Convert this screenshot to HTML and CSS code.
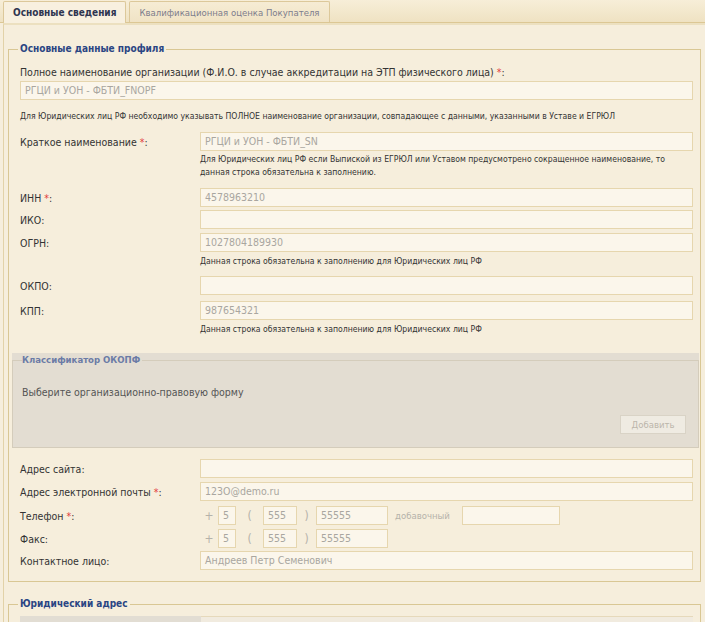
FILE: index.html
```html
<!DOCTYPE html>
<html lang="ru">
<head>
<meta charset="utf-8">
<title>Профиль организации</title>
<link rel="stylesheet" href="styles.css">
</head>
<body>
<div class="tabs">
  <div class="tab active">Основные сведения</div>
  <div class="tab">Квалификационная оценка Покупателя</div>
</div>
<div class="panel">
  <fieldset class="box">
    <legend>Основные данные профиля</legend>

    <div class="top-label">Полное наименование организации (Ф.И.О. в случае аккредитации на ЭТП физического лица) <span class="req">*</span>:</div>
    <div class="field full">РГЦИ и УОН - ФБТИ_FNOPF</div>
    <div class="hint hint-full">Для Юридических лиц РФ необходимо указывать ПОЛНОЕ наименование организации, совпадающее с данными, указанными в Уставе и ЕГРЮЛ</div>

    <div class="row r-short">
      <div class="lbl">Краткое наименование <span class="req">*</span>:</div>
      <div class="field">РГЦИ и УОН - ФБТИ_SN</div>
      <div class="hint hint-2">Для Юридических лиц РФ если Выпиской из ЕГРЮЛ или Уставом предусмотрено сокращенное наименование, то данная строка обязательна к заполнению.</div>
    </div>

    <div class="row r-inn">
      <div class="lbl">ИНН <span class="req">*</span>:</div>
      <div class="field">4578963210</div>
    </div>
    <div class="row r-iko">
      <div class="lbl">ИКО:</div>
      <div class="field"></div>
    </div>
    <div class="row r-ogrn">
      <div class="lbl">ОГРН:</div>
      <div class="field">1027804189930</div>
      <div class="hint hint-1">Данная строка обязательна к заполнению для Юридических лиц РФ</div>
    </div>
    <div class="row r-okpo">
      <div class="lbl">ОКПО:</div>
      <div class="field"></div>
    </div>
    <div class="row r-kpp">
      <div class="lbl">КПП:</div>
      <div class="field">987654321</div>
      <div class="hint hint-1">Данная строка обязательна к заполнению для Юридических лиц РФ</div>
    </div>

    <div class="okopf">
      <fieldset class="okopf-set">
        <legend>Классификатор ОКОПФ</legend>
        <div class="okopf-text">Выберите организационно-правовую форму</div>
        <div class="okopf-actions"><button class="btn" type="button" disabled>Добавить</button></div>
      </fieldset>
    </div>

    <div class="row r-site">
      <div class="lbl">Адрес сайта:</div>
      <div class="field"></div>
    </div>
    <div class="row r-mail">
      <div class="lbl">Адрес электронной почты <span class="req">*</span>:</div>
      <div class="field">123O@demo.ru</div>
    </div>
    <div class="row r-phone">
      <div class="lbl">Телефон <span class="req">*</span>:</div>
      <div class="phone">
        <span class="sep plus">+</span>
        <span class="field f-cc">5</span>
        <span class="sep open">(</span>
        <span class="field f-code">555</span>
        <span class="sep close">)</span>
        <span class="field f-num">55555</span>
        <span class="ext">добавочный</span>
        <span class="field f-ext"></span>
      </div>
    </div>
    <div class="row r-fax">
      <div class="lbl">Факс:</div>
      <div class="phone">
        <span class="sep plus">+</span>
        <span class="field f-cc">5</span>
        <span class="sep open">(</span>
        <span class="field f-code">555</span>
        <span class="sep close">)</span>
        <span class="field f-num">55555</span>
      </div>
    </div>
    <div class="row r-contact">
      <div class="lbl">Контактное лицо:</div>
      <div class="field">Андреев Петр Семенович</div>
    </div>
  </fieldset>

  <fieldset class="box box-addr">
    <legend>Юридический адрес</legend>
    <div class="addr-row">
      <div class="addr-lbl"></div>
      <div class="addr-val"></div>
    </div>
  </fieldset>
</div>
</body>
</html>
```

FILE: styles.css
```css
html, body {
  margin: 0;
  padding: 0;
}
body {
  background: #f6eedc;
  font-family: "DejaVu Sans Condensed", "DejaVu Sans", sans-serif;
  font-size: 10.5px;
  color: #333;
  overflow: hidden;
}

/* tabs */
.tabs {
  display: flex;
  gap: 3px;
  height: 21px;
  padding: 1px 0 0 3px;
  background: linear-gradient(#f7eed8, #efe2c2);
  border-bottom: 1px solid #dcc794;
}
.tab {
  display: flex;
  align-items: center;
  padding: 0 9px;
  border: 1px solid #dcc89a;
  border-bottom: none;
  border-radius: 2px 2px 0 0;
  background: linear-gradient(#f6ecd4, #f0e3c5);
  color: #7d7d8c;
  font-size: 9.5px;
}
.tab.active {
  background: #f8f0df;
  color: #2e3550;
  font-weight: bold;
  font-size: 10px;
  margin-bottom: -1px;
}

/* panel */
.panel {
  margin-left: 3px;
  border-left: 1px solid #e2d2a8;
  border-top: 2px solid #ece0c0;
  padding: 17px 4px 0 4px;
}

fieldset.box {
  margin: 0;
  padding: 9px 7px 11px 11px;
  border: 1px solid #d9c794;
  min-width: 0;
}
fieldset.box > legend {
  padding: 0 2px;
  margin-left: -2px;
  font-weight: bold;
  font-size: 10px;
  color: #2a4583;
  line-height: 14px;
}

.req {
  color: #e23a3a;
}

.top-label {
  line-height: 14px;
}
.field {
  display: block;
  box-sizing: border-box;
  height: 19px;
  line-height: 17px;
  padding: 0 4px;
  background: #fbf6eb;
  border: 1px solid #e6d6ae;
  color: #a9a6a0;
  white-space: nowrap;
  overflow: hidden;
}
.full {
  margin-top: 2px;
}
.hint {
  font-size: 8.6px;
  color: #333;
}
.hint-full {
  margin-top: 10px;
  line-height: 12px;
}

.row {
  display: grid;
  grid-template-columns: 180px 1fr;
  align-items: center;
}
.row .hint {
  grid-column: 2;
}
.hint-2 {
  margin-top: 2px;
  line-height: 13px;
  max-width: 478px;
}
.hint-1 {
  margin-top: 3px;
  line-height: 12px;
}
.lbl {
  line-height: 14px;
}

.r-short { margin-top: 10px; }
.r-inn { margin-top: 9px; }
.r-iko { margin-top: 3px; }
.r-ogrn { margin-top: 4px; }
.r-okpo { margin-top: 9px; }
.r-kpp { margin-top: 6px; }

/* okopf */
.okopf {
  margin: 18px -6px 0 -8px;
  background: #e3ddd2;
}
.okopf-set {
  margin: 0;
  padding: 18px 12px 13px 9px;
  border: 1px solid #d4ccbb;
  min-width: 0;
}
.okopf-set > legend {
  padding: 0 2px 0 0;
  font-weight: bold;
  color: #6b7ba6;
  line-height: 14px;
  font-size: 9.5px;
}
.okopf-text {
  line-height: 14px;
  color: #555;
}
.okopf-actions {
  display: flex;
  justify-content: flex-end;
  margin-top: 16px;
}
.btn {
  height: 19px;
  width: 66px;
  padding: 0;
  background: #efebe2;
  border: 1px solid #d9d3c6;
  color: #bcb6ab;
  font-family: inherit;
  font-size: 9.5px;
}

.r-site { margin-top: 11px; }
.r-mail { margin-top: 4px; }
.r-phone { margin-top: 5px; }
.r-fax { margin-top: 4px; }
.r-contact { margin-top: 3px; }

.phone {
  display: flex;
  align-items: center;
}
.sep {
  color: #b5b2aa;
  text-align: center;
  font-size: 12px;
}
.plus { width: 18px; }
.open { width: 27px; }
.close { width: 19px; }
.f-cc { width: 18px; }
.f-code { width: 34px; }
.f-num { width: 72px; }
.ext {
  margin: 0 7px;
  width: 60px;
  color: #b5b2aa;
  font-size: 9.5px;
}
.f-ext { width: 98px; }

/* address */
.box-addr {
  margin-top: 15px !important;
  padding-top: 5px !important;
}
.addr-row {
  display: flex;
  height: 20px;
}
.addr-lbl {
  width: 181px;
  background: #e2ddd3;
}
.addr-val {
  flex: 1;
  background: #f1ebdf;
  border-top: 1px solid #e6d9bb;
}
```
